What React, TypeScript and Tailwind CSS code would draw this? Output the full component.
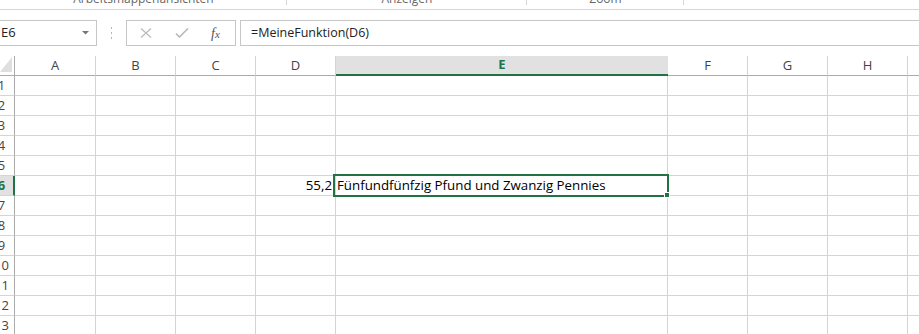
import React from "react";

const cols = [
  { k: "A", w: "w-[81px]" },
  { k: "B", w: "w-[80px]" },
  { k: "C", w: "w-[80px]" },
  { k: "D", w: "w-[80px]" },
  { k: "E", w: "w-[332px]" },
  { k: "F", w: "w-[80px]" },
  { k: "G", w: "w-[80px]" },
  { k: "H", w: "w-[80px]" },
];

const rows = [1, 2, 3, 4, 5, 6, 7, 8, 9, 10, 11, 12, 13];

function Ribbon() {
  return (
    <div className="flex h-[10px] border-b border-[#d5d5d5] text-[12px] text-[#666] leading-[14px]">
      <div className="relative w-[287px] overflow-hidden">
        <div className="absolute left-0 right-0 top-[-8px] text-center">Arbeitsmappenansichten</div>
        <div className="absolute right-0 top-0 h-[5px] w-px bg-[#d5d5d5]" />
      </div>
      <div className="relative w-[240px] overflow-hidden">
        <div className="absolute left-0 right-0 top-[-8px] text-center">Anzeigen</div>
        <div className="absolute right-0 top-0 h-[5px] w-px bg-[#d5d5d5]" />
      </div>
      <div className="relative w-[157px] overflow-hidden">
        <div className="absolute left-0 right-0 top-[-8px] text-center">Zoom</div>
        <div className="absolute right-0 top-0 h-[5px] w-px bg-[#d5d5d5]" />
      </div>
      <div className="flex-1" />
    </div>
  );
}

function FormulaBar() {
  return (
    <div className="mt-[10px] flex h-[26px] items-stretch">
      <div className="ml-[-2px] flex w-[99px] items-center justify-between border border-[#c6c6c6] pl-[2px] pr-[6px] text-[13px] text-[#222]">
        <span>E6</span>
        <svg width="8" height="4" viewBox="0 0 8 4">
          <path d="M0 0 L7 0 L3.5 3.5 Z" fill="#777" />
        </svg>
      </div>
      <div className="flex w-[29px] flex-col items-center justify-center gap-[3px]">
        <div className="h-[2px] w-[1px] bg-[#b5b5b5]" />
        <div className="h-[2px] w-[1px] bg-[#b5b5b5]" />
        <div className="h-[2px] w-[1px] bg-[#b5b5b5]" />
      </div>
      <div className="flex w-[110px] items-center border border-[#c6c6c6]">
        <svg className="ml-[13px]" width="12" height="10" viewBox="0 0 12 10">
          <path d="M1 0.5 L11 9.5 M11 0.5 L1 9.5" stroke="#b9b9b9" strokeWidth="1.1" />
        </svg>
        <svg className="ml-[23px]" width="14" height="10" viewBox="0 0 14 10">
          <path d="M1 5.5 L4.5 9 L13 0.5" stroke="#b9b9b9" strokeWidth="1.6" fill="none" />
        </svg>
        <span className="ml-[22px] font-['Liberation_Serif',serif] text-[14px] italic text-[#555]">
          f<span className="text-[11px]">x</span>
        </span>
      </div>
      <div className="ml-[4px] flex flex-1 items-center border border-r-0 border-[#c6c6c6] pl-[10px] text-[12.5px] text-[#222]">
        =MeineFunktion(D6)
      </div>
    </div>
  );
}

function HeaderRow() {
  return (
    <div className="flex h-[20px]">
      <div className="flex w-[15px] items-end justify-end border-r border-b border-[#ababab] pb-[3px] pr-[2px]">
        <svg width="12" height="15" viewBox="0 0 12 15">
          <path d="M12 0 L12 15 L0 15 Z" fill="#dfdfdf" />
        </svg>
      </div>
      {cols.map((c) =>
        c.k === "E" ? (
          <div
            key={c.k}
            className={`${c.w} flex items-center justify-center border-b-2 border-[#217346] bg-[#e1e1e1] text-[13px] font-bold text-[#217346]`}
          >
            {c.k}
          </div>
        ) : (
          <div
            key={c.k}
            className={`${c.w} flex items-center justify-center border-r border-[#d4d4d4] border-b border-b-[#ababab] text-[13px] text-[#444]`}
          >
            {c.k}
          </div>
        )
      )}
      <div className="flex-1 border-b border-[#ababab]" />
    </div>
  );
}

function Row({ n }: { n: number }) {
  const active = n === 6;
  return (
    <div className="flex h-[20px]">
      <div
        className={
          active
            ? "w-[15px] overflow-hidden border-r-2 border-[#217346] border-b border-b-[#d4d4d4] bg-[#e1e1e1]"
            : "w-[15px] overflow-hidden border-r border-[#ababab] border-b border-b-[#d4d4d4]"
        }
      >
        <div
          className={
            active
              ? "ml-[-12px] w-[27px] text-center text-[13px] leading-[19px] font-bold text-[#217346]"
              : "ml-[-12px] w-[27px] text-center text-[13px] leading-[19px] text-[#444]"
          }
        >
          {n}
        </div>
      </div>
      {cols.map((c) => {
        if (active && c.k === "D") {
          return (
            <div
              key={c.k}
              className={`${c.w} flex items-center justify-end border-r border-b border-[#d4d4d4] pr-[3px] text-[13.3px] text-black`}
            >
              55,2
            </div>
          );
        }
        if (active && c.k === "E") {
          return (
            <div
              key={c.k}
              className={`${c.w} relative flex items-center border-r border-b border-[#d4d4d4] pl-[1px] text-[13.3px] text-black`}
            >
              <span className="whitespace-nowrap">Fünfundfünfzig Pfund und Zwanzig Pennies</span>
              <div className="pointer-events-none absolute left-[-3px] top-[-2px] h-[23px] w-[336px] border-2 border-[#217346]" />
              <div className="absolute left-[328px] top-[16px] h-[6px] w-[6px] border border-white bg-[#217346]" />
            </div>
          );
        }
        return <div key={c.k} className={`${c.w} border-r border-b border-[#d4d4d4]`} />;
      })}
      <div className="flex-1 border-b border-[#d4d4d4]" />
    </div>
  );
}

export default function App() {
  return (
    <div className="relative h-[334px] w-[919px] overflow-hidden bg-white font-['Open_Sans',sans-serif]">
      <Ribbon />
      <FormulaBar />
      <div className="mt-[10px]">
        <HeaderRow />
        {rows.map((n) => (
          <Row key={n} n={n} />
        ))}
      </div>
    </div>
  );
}
